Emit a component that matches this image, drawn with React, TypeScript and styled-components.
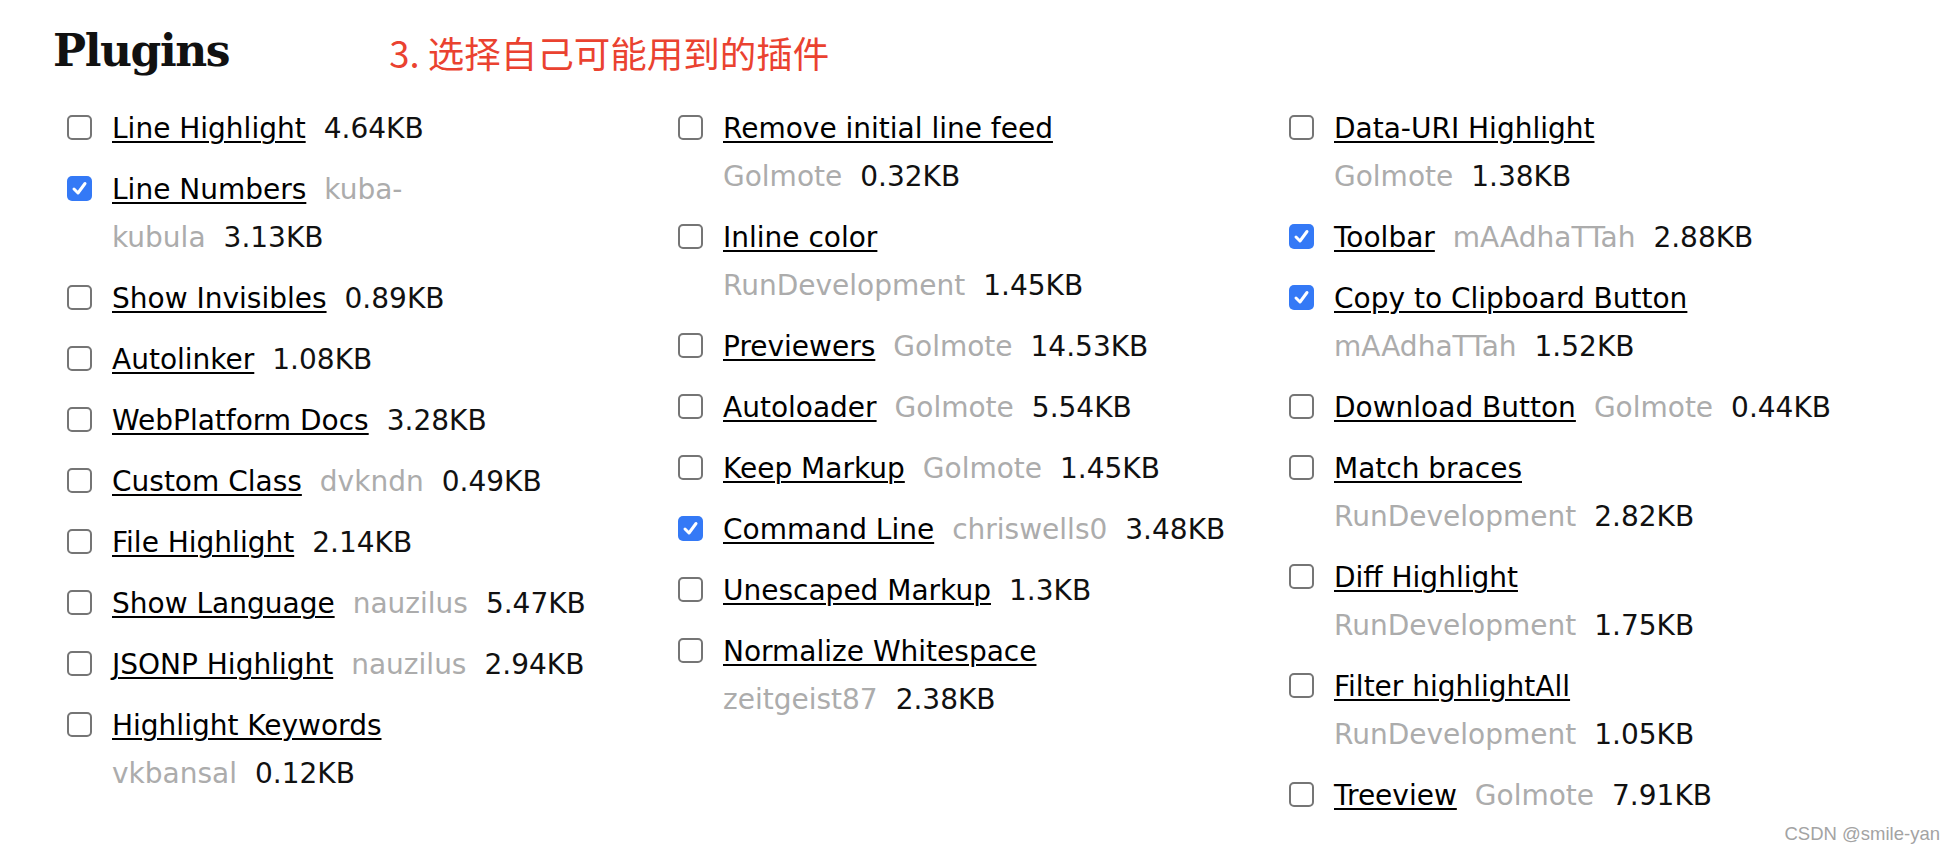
import React from 'react';
import styled, { createGlobalStyle } from 'styled-components';

const GlobalStyle = createGlobalStyle`
  html, body {
    margin: 0;
    padding: 0;
    background: #fff;
  }
  #root {
    min-height: 854px;
  }
`;

type Plugin = {
  name: string;
  author?: string;
  size: string;
  checked?: boolean;
  wrap?: boolean;
};

const columns: Plugin[][] = [
  [
    { name: 'Line Highlight', size: '4.64KB' },
    { name: 'Line Numbers', author: 'kuba-\nkubula', size: '3.13KB', checked: true },
    { name: 'Show Invisibles', size: '0.89KB' },
    { name: 'Autolinker', size: '1.08KB' },
    { name: 'WebPlatform Docs', size: '3.28KB' },
    { name: 'Custom Class', author: 'dvkndn', size: '0.49KB' },
    { name: 'File Highlight', size: '2.14KB' },
    { name: 'Show Language', author: 'nauzilus', size: '5.47KB' },
    { name: 'JSONP Highlight', author: 'nauzilus', size: '2.94KB' },
    { name: 'Highlight Keywords', author: 'vkbansal', size: '0.12KB', wrap: true },
  ],
  [
    { name: 'Remove initial line feed', author: 'Golmote', size: '0.32KB', wrap: true },
    { name: 'Inline color', author: 'RunDevelopment', size: '1.45KB', wrap: true },
    { name: 'Previewers', author: 'Golmote', size: '14.53KB' },
    { name: 'Autoloader', author: 'Golmote', size: '5.54KB' },
    { name: 'Keep Markup', author: 'Golmote', size: '1.45KB' },
    { name: 'Command Line', author: 'chriswells0', size: '3.48KB', checked: true },
    { name: 'Unescaped Markup', size: '1.3KB' },
    { name: 'Normalize Whitespace', author: 'zeitgeist87', size: '2.38KB', wrap: true },
  ],
  [
    { name: 'Data-URI Highlight', author: 'Golmote', size: '1.38KB', wrap: true },
    { name: 'Toolbar', author: 'mAAdhaTTah', size: '2.88KB', checked: true },
    { name: 'Copy to Clipboard Button', author: 'mAAdhaTTah', size: '1.52KB', checked: true, wrap: true },
    { name: 'Download Button', author: 'Golmote', size: '0.44KB' },
    { name: 'Match braces', author: 'RunDevelopment', size: '2.82KB', wrap: true },
    { name: 'Diff Highlight', author: 'RunDevelopment', size: '1.75KB', wrap: true },
    { name: 'Filter highlightAll', author: 'RunDevelopment', size: '1.05KB', wrap: true },
    { name: 'Treeview', author: 'Golmote', size: '7.91KB' },
  ],
];

const Page = styled.div`
  position: relative;
  height: 854px;
  padding: 14px 0 0 53px;
  box-sizing: border-box;
  font-family: 'DejaVu Sans', 'Liberation Sans', sans-serif;
`;

const Header = styled.div`
  display: flex;
  align-items: center;
  height: 72px;
`;

const Title = styled.h1`
  margin: 0;
  font-family: 'DejaVu Serif', 'Liberation Serif', serif;
  font-weight: bold;
  font-size: 44px;
  letter-spacing: -1.4px;
  color: #111;
`;

const Note = styled.div`
  margin-left: 160px;
  margin-top: 4px;
  font-family: 'Noto Sans CJK SC', 'Noto Sans', sans-serif;
  font-size: 36.5px;
  color: #ea4230;
`;

const Columns = styled.div`
  display: grid;
  grid-template-columns: repeat(3, 611px);
  margin-top: 19px;
  padding-left: 14px;
`;

const Column = styled.div`
  display: flex;
  flex-direction: column;
  gap: 13px;
`;

const Item = styled.label`
  display: flex;
  align-items: flex-start;
  gap: 20px;
`;

const Box = styled.span<{ $checked?: boolean }>`
  flex: none;
  width: 25px;
  height: 25px;
  margin-top: 10px;
  box-sizing: border-box;
  border-radius: 5px;
  border: ${(p) => (p.$checked ? 'none' : '2px solid #757575')};
  background: ${(p) => (p.$checked ? '#3479f6' : '#fff')};
  display: flex;
  align-items: center;
  justify-content: center;
`;

const Text = styled.div`
  font-size: 28px;
  line-height: 48px;
  white-space: nowrap;
`;

const Name = styled.a`
  color: #000;
  text-decoration: underline;
  text-decoration-thickness: 2px;
  text-underline-offset: 3px;
  margin-right: 18px;
`;

const Author = styled.span`
  color: #acacac;
  margin-right: 18px;
`;

const Size = styled.span`
  color: #111;
`;

const Watermark = styled.div`
  position: absolute;
  right: 14px;
  bottom: 9px;
  font-family: 'Liberation Sans', sans-serif;
  font-size: 18.5px;
  color: #a3a3a3;
`;

const Check = () => (
  <svg width="17" height="17" viewBox="0 0 17 17">
    <path d="M3 9 L7 13 L14 3.5" fill="none" stroke="#fff" strokeWidth="3" strokeLinecap="round" strokeLinejoin="round" />
  </svg>
);

const PluginItem = ({ plugin }: { plugin: Plugin }) => {
  const authorParts = plugin.author ? plugin.author.split('\n') : [];
  return (
    <Item>
      <Box $checked={plugin.checked}>{plugin.checked && <Check />}</Box>
      <Text>
        <Name>{plugin.name}</Name>
        {plugin.wrap && <br />}
        {plugin.author && (
          <Author>
            {authorParts.map((part, i) => (
              <React.Fragment key={i}>
                {i > 0 && <br />}
                {part}
              </React.Fragment>
            ))}
          </Author>
        )}
        <Size>{plugin.size}</Size>
      </Text>
    </Item>
  );
};

const App = () => {
  return (
    <Page>
      <GlobalStyle />
      <Header>
        <Title>Plugins</Title>
        <Note>3. 选择自己可能用到的插件</Note>
      </Header>
      <Columns>
        {columns.map((col, i) => (
          <Column key={i}>
            {col.map((p) => (
              <PluginItem key={p.name} plugin={p} />
            ))}
          </Column>
        ))}
      </Columns>
      <Watermark>CSDN @smile-yan</Watermark>
    </Page>
  );
};

export default App;
